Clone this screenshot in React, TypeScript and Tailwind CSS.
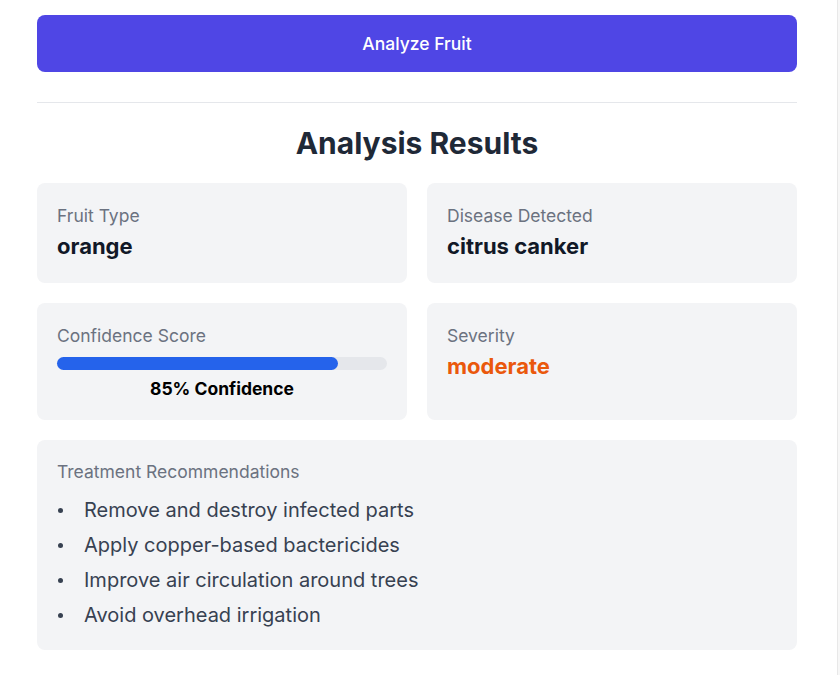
import React from "react";

const items = [
  "Remove and destroy infected parts",
  "Apply copper-based bactericides",
  "Improve air circulation around trees",
  "Avoid overhead irrigation",
];

export default function App() {
  return (
    <div className="flex min-h-[675px] bg-white font-['Inter','Noto_Sans',sans-serif]">
      <div className="w-[837px]">
        <div className="ml-[37px] w-[760px] pt-[15px]">
          <button className="flex h-[57px] w-full items-center justify-center rounded-lg bg-[#4f46e5] pt-[2px] text-[17.5px] font-medium text-white">
            Analyze Fruit
          </button>
          <div className="mt-[30px] h-px bg-[#e5e7eb]" />
          <h2 className="mt-[22px] text-center text-3xl leading-9 font-bold text-[#1f2937]">
            Analysis Results
          </h2>
          <div className="mt-[22px] grid grid-cols-2 gap-5">
            <div className="rounded-lg bg-[#f3f4f6] px-5 pt-[21px] pb-[21px]">
              <div className="text-[17.5px] leading-6 text-[#6b7280]">Fruit Type</div>
              <div className="mt-[2px] text-[22px] leading-8 font-bold text-[#111827]">orange</div>
            </div>
            <div className="rounded-lg bg-[#f3f4f6] px-5 pt-[21px] pb-[21px]">
              <div className="text-[17.5px] leading-6 text-[#6b7280]">Disease Detected</div>
              <div className="mt-[2px] text-[22px] leading-8 font-bold text-[#111827]">citrus canker</div>
            </div>
            <div className="rounded-lg bg-[#f3f4f6] px-5 pt-[21px] pb-[19px]">
              <div className="text-[17.5px] leading-6 text-[#6b7280]">Confidence Score</div>
              <div className="mt-[9px] h-[13px] w-full rounded-full bg-[#e5e7eb]">
                <div className="h-[13px] rounded-full bg-[#2563eb]" style={{ width: "85%" }} />
              </div>
              <div className="mt-[7px] text-center text-[17.5px] leading-6 font-bold text-black">
                85% Confidence
              </div>
            </div>
            <div className="rounded-lg bg-[#f3f4f6] px-5 pt-[21px] pb-[17px]">
              <div className="text-[17.5px] leading-6 text-[#6b7280]">Severity</div>
              <div className="mt-[2px] text-[22px] leading-8 font-bold text-[#ea580c]">moderate</div>
            </div>
          </div>
          <div className="mt-5 rounded-lg bg-[#f3f4f6] px-5 pt-5 pb-[21px]">
            <div className="text-[17.5px] leading-6 text-[#6b7280]">Treatment Recommendations</div>
            <ul className="mt-3 flex flex-col gap-[7px]">
              {items.map((t) => (
                <li key={t} className="flex items-center text-xl leading-7 text-[#374151]">
                  <span className="ml-[1px] h-[5px] w-[5px] rounded-full bg-[#374151]" />
                  <span className="ml-[21px]">{t}</span>
                </li>
              ))}
            </ul>
          </div>
        </div>
      </div>
      <div className="w-[3px] border-l border-[#e8e8e8] bg-[#f7f7f7]" />
    </div>
  );
}
